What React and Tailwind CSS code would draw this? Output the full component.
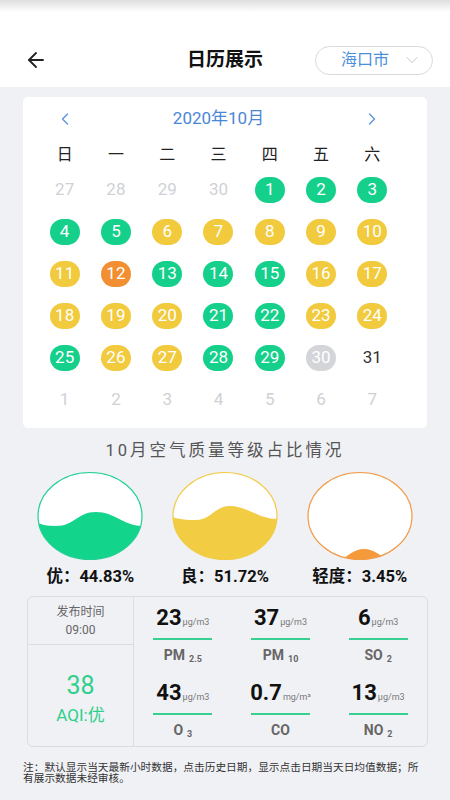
import { ArrowLeft, ChevronDown, ChevronLeft, ChevronRight } from "lucide-react";

const GREEN = "bg-[#14d08b]";
const YELLOW = "bg-[#f1ca3e]";
const ORANGE = "bg-[#f28f33]";

const weeks = ["日", "一", "二", "三", "四", "五", "六"];

// [label, kind] kind: o = other month, g/y/r = level, x = no data (grey dot), n = plain
const days = [
  [["27", "o"], ["28", "o"], ["29", "o"], ["30", "o"], ["1", "g"], ["2", "g"], ["3", "g"]],
  [["4", "g"], ["5", "g"], ["6", "y"], ["7", "y"], ["8", "y"], ["9", "y"], ["10", "y"]],
  [["11", "y"], ["12", "r"], ["13", "g"], ["14", "g"], ["15", "g"], ["16", "y"], ["17", "y"]],
  [["18", "y"], ["19", "y"], ["20", "y"], ["21", "g"], ["22", "g"], ["23", "y"], ["24", "y"]],
  [["25", "g"], ["26", "y"], ["27", "y"], ["28", "g"], ["29", "g"], ["30", "x"], ["31", "n"]],
  [["1", "o"], ["2", "o"], ["3", "o"], ["4", "o"], ["5", "o"], ["6", "o"], ["7", "o"]]
];

const dotClass = {
  g: GREEN,
  y: YELLOW,
  r: ORANGE,
  x: "bg-[#d3d5d9]"
};

const DayCell = ({ label, kind }) => {
  if (kind === "o") return <span className="text-[17px] text-[#cfd1d5]">{label}</span>;
  if (kind === "n") return <span className="text-[17px] text-[#333]">{label}</span>;
  return (
    <span className={`flex h-[26px] w-[30px] items-center justify-center rounded-full text-[17px] text-white ${dotClass[kind]}`}>
      {label}
    </span>
  );
};

const Wave = ({ id, stroke, fill, path }) => (
  <svg width="106" height="90" viewBox="0 0 106 90">
    <defs>
      <clipPath id={id}>
        <ellipse cx="53" cy="45" rx="52" ry="43.5" />
      </clipPath>
    </defs>
    <ellipse cx="53" cy="45" rx="52" ry="43.5" fill="#fff" />
    <path d={path} fill={fill} clipPath={`url(#${id})`} />
    <ellipse cx="53" cy="45" rx="52" ry="43.5" fill="none" stroke={stroke} strokeWidth="1.2" />
  </svg>
);

const waves = [
  {
    id: "w1",
    stroke: "#22d093",
    fill: "#12d48b",
    path: "M0 52 C8 55, 12 55, 19 55 C38 55, 40 41, 59 41 C78 41, 86 55, 106 55 V100 H0 Z",
    label: "优：44.83%"
  },
  {
    id: "w2",
    stroke: "#f1cb45",
    fill: "#f2cd43",
    path: "M0 46 C10 49, 15 49, 23 49 C40 49, 42 35, 58 35 C75 35, 86 48, 106 48 V100 H0 Z",
    label: "良：51.72%"
  },
  {
    id: "w3",
    stroke: "#f29a45",
    fill: "#f59a3a",
    path: "M22 92 C38 92, 42 78, 57 78 C72 78, 77 92, 92 92 Z",
    label: "轻度：3.45%"
  }
];

const pollutants = [
  { value: "23", unit: "μg/m3", name: "PM", sub: "2.5" },
  { value: "37", unit: "μg/m3", name: "PM", sub: "10" },
  { value: "6", unit: "μg/m3", name: "SO", sub: "2" },
  { value: "43", unit: "μg/m3", name: "O", sub: "3" },
  { value: "0.7", unit: "mg/m³", name: "CO", sub: "" },
  { value: "13", unit: "μg/m3", name: "NO", sub: "2" }
];

export default function App() {
  return (
    <div className="h-[800px] w-[450px] overflow-hidden bg-[#f0f1f5] font-['Roboto','Noto_Sans_CJK_SC',sans-serif]">
      <header className="h-[87px] bg-gradient-to-b from-[#dedede] via-white via-[14%] to-white">
        <div className="flex h-[28px] translate-y-[46px] items-center">
          <ArrowLeft className="ml-[24px] h-[24px] w-[24px] text-[#222]" strokeWidth={1.8} />
          <h1 className="ml-[139px] w-[78px] text-[19px] font-bold text-[#111]">日历展示</h1>
          <div className="ml-[50px] flex h-[29px] w-[118px] items-center rounded-full border border-[#d9dadd] pl-[25px]">
            <span className="text-[16px] text-[#4a8fdc]">海口市</span>
            <ChevronDown className="ml-[11px] h-[20px] w-[24px] text-[#c4c6ca]" strokeWidth={1.2} />
          </div>
        </div>
      </header>

      <main className="pt-[10px]">
        <section className="mx-[23px] rounded-[5px] bg-white pb-[7px] pl-[16px] pr-[29px]">
          <div className="flex h-[44px] items-center justify-between px-[16px]">
            <ChevronLeft className="h-[20px] w-[20px] text-[#5a92dc]" strokeWidth={1.6} />
            <span className="text-[17px] text-[#4a86d6]">2020年10月</span>
            <ChevronRight className="h-[20px] w-[20px] text-[#5a92dc]" strokeWidth={1.6} />
          </div>
          <div className="grid h-[28px] grid-cols-7 items-center">
            {weeks.map(w => (
              <span key={w} className="text-center text-[16px] text-[#222]">{w}</span>
            ))}
          </div>
          {days.map((row, i) => (
            <div key={i} className="grid h-[42px] grid-cols-7 items-center">
              {row.map(([label, kind], j) => (
                <div key={j} className="flex justify-center">
                  <DayCell label={label} kind={kind} />
                </div>
              ))}
            </div>
          ))}
        </section>

        <h2 className="mt-[11px] h-[24px] text-center text-[16.5px] leading-[24px] tracking-[3px] text-[#555]">
          10月空气质量等级占比情况
        </h2>

        <div className="mx-[23px] mt-[8px] grid grid-cols-3">
          {waves.map(w => (
            <div key={w.id} className="flex flex-col items-center">
              <Wave id={w.id} stroke={w.stroke} fill={w.fill} path={w.path} />
              <span className="mt-[6px] h-[20px] text-[16.5px] font-bold leading-[20px] text-[#111]">{w.label}</span>
            </div>
          ))}
        </div>

        <div className="ml-[27px] mr-[22px] mt-[9px] flex h-[151px] rounded-[6px] border border-[#dcdde1]">
          <div className="flex w-[106px] flex-col border-r border-[#dcdde1]">
            <div className="flex h-[48px] flex-col items-center justify-center border-b border-[#dcdde1] text-[12px] leading-[18px] text-[#666]">
              <span>发布时间</span>
              <span>09:00</span>
            </div>
            <div className="flex flex-1 flex-col items-center justify-center pt-[8px] text-[#2fcf8c]">
              <span className="text-[25px] leading-[30px]">38</span>
              <span className="mt-[1px] text-[17px] leading-[26px]">AQI:优</span>
            </div>
          </div>
          <div className="grid flex-1 grid-cols-3 grid-rows-2">
            {pollutants.map(p => (
              <div key={p.name + p.sub} className="flex flex-col items-center pt-[9px]">
                <div className="flex h-[24px] items-end">
                  <span className="text-[22px] font-bold leading-[24px] text-[#111]">{p.value}</span>
                  <span className="mb-[2px] ml-[1px] text-[9px] leading-[12px] text-[#777]">{p.unit}</span>
                </div>
                <div className="mt-[8px] h-[2px] w-[59px] bg-[#37cf92]" />
                <div className="mt-[6px] flex h-[18px] items-end text-[#666]">
                  <span className="text-[14px] font-bold leading-[18px]">{p.name}</span>
                  {p.sub && <span className="mb-[-2px] ml-[4px] text-[9px] font-bold leading-[14px]">{p.sub}</span>}
                </div>
              </div>
            ))}
          </div>
        </div>

        <p className="mx-[23px] mt-[15px] text-[10.7px] leading-[11px] text-[#333]">
          注：默认显示当天最新小时数据，点击历史日期，显示点击日期当天日均值数据；所有展示数据未经审核。
        </p>
      </main>
    </div>
  );
}
